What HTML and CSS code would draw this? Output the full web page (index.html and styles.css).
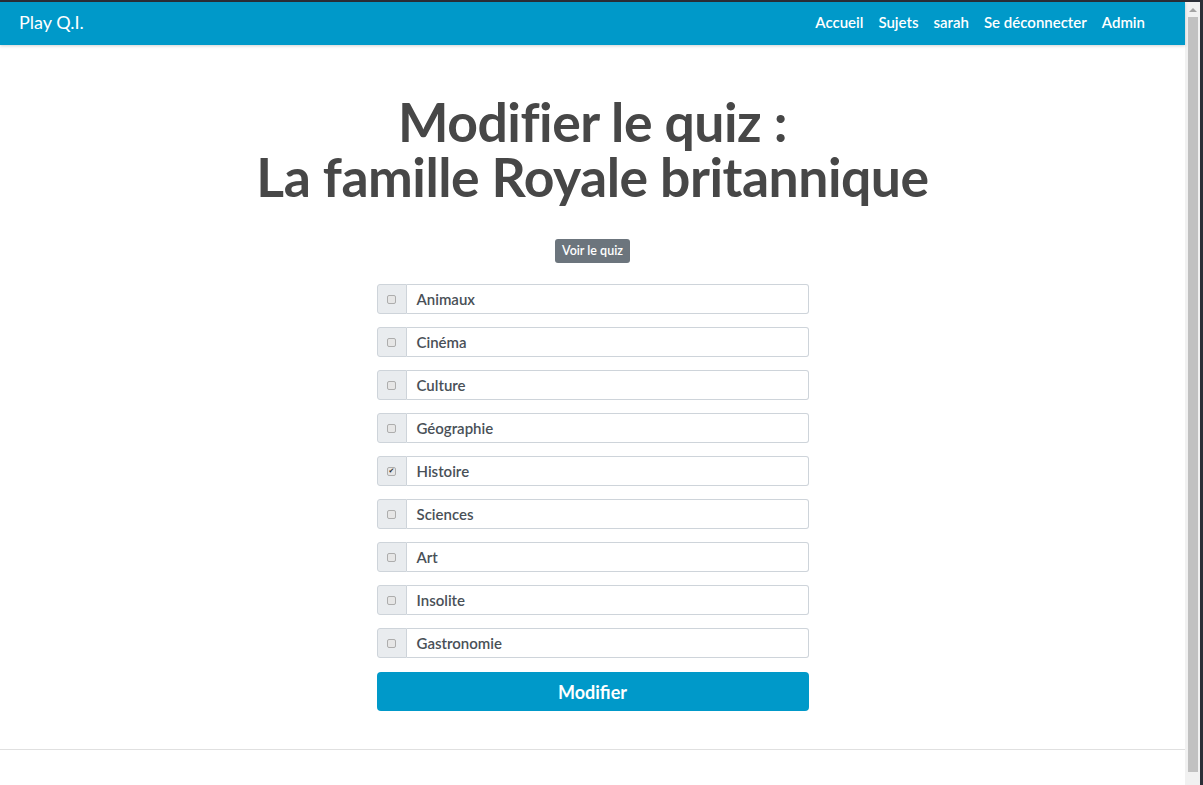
FILE: index.html
```html
<!DOCTYPE html>
<html lang="fr">
<head>
<meta charset="utf-8">
<title>Play Q.I.</title>
<link rel="stylesheet" href="styles.css">
</head>
<body>
<div class="window">
  <div class="frame-top"></div>
  <div class="frame-row">
    <div class="page">
      <nav class="navbar">
        <a class="brand" href="#">Play Q.I.</a>
        <ul class="nav">
          <li><a href="#">Accueil</a></li>
          <li><a href="#">Sujets</a></li>
          <li><a href="#">sarah</a></li>
          <li><a href="#">Se déconnecter</a></li>
          <li><a href="#">Admin</a></li>
        </ul>
      </nav>
      <main class="content">
        <h1 class="title"><span class="line">Modifier le quiz :</span><span class="line">La famille Royale britannique</span></h1>
        <a class="btn-view" href="#">Voir le quiz</a>
        <form class="topics">
          <div class="group"><span class="addon"><span class="box"></span></span><span class="field">Animaux</span></div>
          <div class="group"><span class="addon"><span class="box"></span></span><span class="field">Cinéma</span></div>
          <div class="group"><span class="addon"><span class="box"></span></span><span class="field">Culture</span></div>
          <div class="group"><span class="addon"><span class="box"></span></span><span class="field">Géographie</span></div>
          <div class="group"><span class="addon"><span class="box checked">✔</span></span><span class="field">Histoire</span></div>
          <div class="group"><span class="addon"><span class="box"></span></span><span class="field">Sciences</span></div>
          <div class="group"><span class="addon"><span class="box"></span></span><span class="field">Art</span></div>
          <div class="group"><span class="addon"><span class="box"></span></span><span class="field">Insolite</span></div>
          <div class="group"><span class="addon"><span class="box"></span></span><span class="field">Gastronomie</span></div>
          <button class="btn-submit" type="button">Modifier</button>
        </form>
      </main>
      <hr class="sep">
    </div>
    <div class="scrollbar">
      <div class="arrow"></div>
      <div class="thumb"></div>
    </div>
    <div class="frame-right"></div>
  </div>
</div>
</body>
</html>
```

FILE: styles.css
```css
* { box-sizing: border-box; }
html, body { margin: 0; padding: 0; }
body {
  font-family: Lato, "Open Sans", sans-serif;
  background: #2b2e37;
  overflow: hidden;
}
.window {
  width: 1203px;
  height: 785px;
  display: flex;
  flex-direction: column;
}
.frame-top { height: 2px; background: #2b2e37; flex: none; }
.frame-row { flex: 1; display: flex; min-height: 0; }
.page {
  width: 1185px;
  background: #fff;
  display: flex;
  flex-direction: column;
}
.scrollbar {
  width: 15px;
  background: #f1f1f1;
  display: flex;
  flex-direction: column;
  align-items: center;
  padding-top: 6px;
}
.arrow {
  width: 0; height: 0;
  border-left: 4px solid transparent;
  border-right: 4px solid transparent;
  border-bottom: 4px solid #a3a3a3;
}
.thumb {
  margin-top: 5px;
  width: 10px;
  height: 755px;
  background: #c1c1c1;
}
.frame-right { width: 3px; background: #2b2e37; }

.navbar {
  height: 43px;
  background: #0099c9;
  display: flex;
  align-items: center;
  justify-content: space-between;
  padding: 0 40px 4px 19px;
  box-shadow: 0 1px 3px rgba(0,0,0,0.18);
  position: relative;
  z-index: 1;
}
.brand {
  color: #fff;
  text-decoration: none;
  font-size: 18px;
  font-weight: 400;
}
.nav { list-style: none; margin: 0; padding: 0; display: flex; gap: 15px; }
.nav a {
  color: #fff;
  text-decoration: none;
  font-size: 15px;
  font-weight: 600;
}

.content {
  display: flex;
  flex-direction: column;
  align-items: center;
  padding-top: 49px;
}
.title {
  margin: 0;
  text-align: center;
  color: #474747;
  font-size: 53.5px;
  line-height: 55px;
  font-weight: 700;
  letter-spacing: -0.5px;
}
.title .line { display: block; }
.btn-view {
  margin-top: 35px;
  background: #6c757d;
  color: #fff;
  text-decoration: none;
  font-size: 12.5px;
  font-weight: 600;
  padding: 4px 7px;
  border-radius: 3px;
  line-height: 16px;
}
.topics {
  margin-top: 21px;
  width: 432px;
  display: flex;
  flex-direction: column;
  gap: 13px;
}
.group {
  display: flex;
  height: 30px;
}
.addon {
  width: 30px;
  flex: none;
  background: #e9ecef;
  border: 1px solid #ced4da;
  border-radius: 3px 0 0 3px;
  display: flex;
  align-items: center;
  justify-content: center;
}
.box {
  width: 9px;
  height: 9px;
  border: 1px solid #adadad;
  border-radius: 2px;
  background: #e6e6e6;
  font-size: 7px;
  line-height: 7px;
  color: #333;
  text-align: center;
  font-family: "DejaVu Sans", sans-serif;
}
.field {
  flex: 1;
  border: 1px solid #ced4da;
  border-left: none;
  border-radius: 0 3px 3px 0;
  padding: 0 10px;
  display: flex;
  align-items: center;
  font-size: 15px;
  font-weight: 600;
  color: #495057;
}
.btn-submit {
  margin-top: 1px;
  height: 39px;
  background: #0099c9;
  border: none;
  border-radius: 4px;
  color: #fff;
  font-family: inherit;
  font-size: 18px;
  font-weight: 700;
  cursor: pointer;
}
.sep {
  margin: 38px 0 0;
  border: 0;
  border-top: 1px solid #e0e0e0;
}
```
